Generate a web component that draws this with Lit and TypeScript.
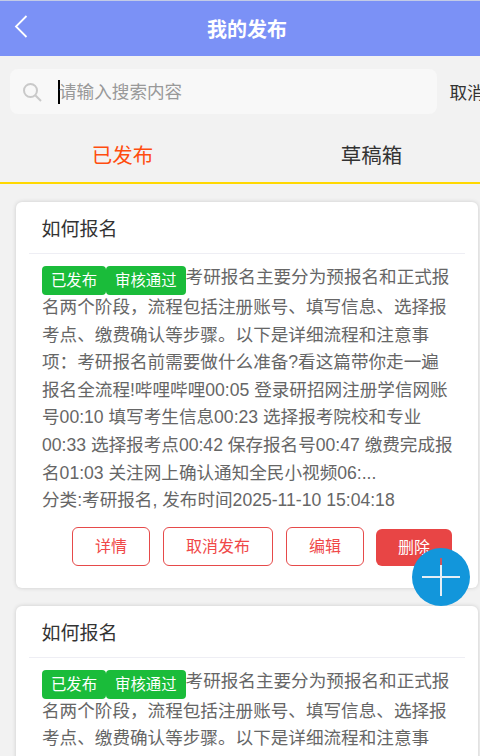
import { LitElement, html, css } from 'lit';
import { customElement, property } from 'lit/decorators.js';

const SUMMARY =
  '考研报名主要分为预报名和正式报名两个阶段，流程包括注册账号、填写信息、选择报考点、缴费确认等步骤。以下是详细流程和注意事项：考研报名前需要做什么准备?看这篇带你走一遍报名全流程!哔哩哔哩00:05 登录研招网注册学信网账号00:10 填写考生信息00:23 选择报考院校和专业00:33 选择报考点00:42 保存报名号00:47 缴费完成报名01:03 关注网上确认通知全民小视频06:...';

@customElement('app-root')
export class AppRoot extends LitElement {
  @property({ type: Array }) posts = [
    { title: '如何报名', summary: SUMMARY, meta: '分类:考研报名, 发布时间2025-11-10 15:04:18' },
    { title: '如何报名', summary: SUMMARY, meta: '分类:考研报名, 发布时间2025-11-10 15:04:18' },
  ];

  renderPost(post: { title: string; summary: string; meta: string }) {
    return html`
      <article class="card">
        <h2 class="card-title">${post.title}</h2>
        <div class="card-body">
          <p class="summary"><span class="tag">已发布</span><span class="tag">审核通过</span>${post.summary}</p>
          <p class="meta">${post.meta}</p>
          <div class="actions">
            <button class="btn">详情</button>
            <button class="btn">取消发布</button>
            <button class="btn">编辑</button>
            <button class="btn solid">删除</button>
          </div>
        </div>
      </article>
    `;
  }

  render() {
    return html`
      <div class="page">
        <header class="topbar">
          <svg class="back" width="14" height="24" viewBox="0 0 14 24" fill="none" stroke="#fff" stroke-width="1.8">
            <path d="M12.5 2 L2 12.5 L12.5 23" />
          </svg>
          <h1>我的发布</h1>
        </header>
        <div class="search-row">
          <div class="search">
            <svg width="20" height="20" viewBox="0 0 20 20" fill="none" stroke="#c9c9c9" stroke-width="2">
              <circle cx="8.5" cy="8.5" r="6.5" />
              <path d="M13.5 13.5 L19 19" />
            </svg>
            <span class="caret"></span>
            <span class="placeholder">请输入搜索内容</span>
          </div>
          <span class="cancel">取消</span>
        </div>
        <nav class="tabs">
          <span class="tab active">已发布</span>
          <span class="tab">草稿箱</span>
        </nav>
        <main class="list">${this.posts.map((p) => this.renderPost(p))}</main>
      </div>
      <div class="fab">
        <svg width="58" height="58" viewBox="0 0 58 58" fill="none" stroke-width="2">
          <path d="M10 29 H48" stroke="#e6eef5" />
          <path d="M29 10 V48" stroke="#e6eef5" />
          <path d="M29 10 V17" stroke="#c9555f" />
        </svg>
      </div>
    `;
  }

  static styles = css`
    * {
      margin: 0;
      padding: 0;
      box-sizing: border-box;
    }
    :host {
      display: block;
      position: relative;
      width: 480px;
      height: 756px;
      overflow: hidden;
      background: #f2f2f2;
      font-family: 'Liberation Sans', 'Noto Sans CJK SC', sans-serif;
      color: #333;
    }
    .page {
      width: 494px;
    }
    .topbar {
      height: 56px;
      background: #7b91f6;
      border-top: 1px solid #c3cbe6;
      position: relative;
      display: flex;
      align-items: center;
      justify-content: center;
    }
    .topbar h1 {
      font-size: 20px;
      font-weight: 700;
      color: #fff;
    }
    .back {
      position: absolute;
      left: 14px;
      top: 13px;
    }
    .search-row {
      display: flex;
      align-items: center;
      padding: 13px 0 0 10px;
    }
    .search {
      width: 427px;
      height: 45px;
      background: #f8f8f8;
      border-radius: 8px;
      display: flex;
      align-items: center;
      padding-left: 12px;
    }
    .caret {
      width: 2px;
      height: 24px;
      background: #000;
      margin: 0 -1px 0 16px;
    }
    .placeholder {
      font-size: 17.6px;
      color: #999;
      padding-bottom: 2px;
    }
    .cancel {
      margin-left: 12.5px;
      font-size: 17.6px;
      white-space: nowrap;
    }
    .tabs {
      display: flex;
      gap: 4px;
      height: 70px;
      padding-top: 12px;
      border-bottom: 2px solid #ffd800;
    }
    .tab {
      flex: 1;
      display: flex;
      align-items: center;
      justify-content: center;
      font-size: 20.48px;
    }
    .tab.active {
      color: #ff4d0f;
    }
    .list {
      padding: 18px 16px;
      display: flex;
      flex-direction: column;
      gap: 18px;
    }
    .card {
      background: #fff;
      border-radius: 6px;
      box-shadow: 0 0 4px rgba(0, 0, 0, 0.16);
    }
    .card-title {
      margin: 0 13px;
      padding: 0 12.5px;
      height: 52px;
      line-height: 56px;
      font-size: 19px;
      font-weight: 400;
      border-bottom: 1px solid #eeeef4;
    }
    .card-body {
      padding: 9px 25px 22px 26px;
      font-size: 17.6px;
      line-height: 27.6px;
      color: #666;
    }
    .tag {
      display: inline-block;
      height: 29px;
      margin: 3px 0 -1px;
      line-height: 29px;
      padding: 0 9px;
      background: #1abc3a;
      color: #fff;
      border-radius: 4px;
      font-size: 15.36px;
      vertical-align: middle;
    }
    .meta {
      white-space: nowrap;
    }
    .actions {
      display: flex;
      justify-content: flex-end;
      align-items: flex-end;
      gap: 13px;
      margin: 12px 1px 0 0;
    }
    .btn {
      height: 39px;
      padding: 0 22px;
      background: #fff;
      border: 1px solid #e64a4a;
      border-radius: 6px;
      color: #f04848;
      font: inherit;
      font-size: 16px;
      line-height: 37px;
    }
    .btn.solid {
      height: 37px;
      margin-left: -1px;
      border: 0;
      background: #e84545;
      color: #fff;
    }
    .fab {
      position: absolute;
      left: 412px;
      top: 548px;
      width: 58px;
      height: 58px;
      border-radius: 50%;
      background: #1296db;
    }
  `;
}
